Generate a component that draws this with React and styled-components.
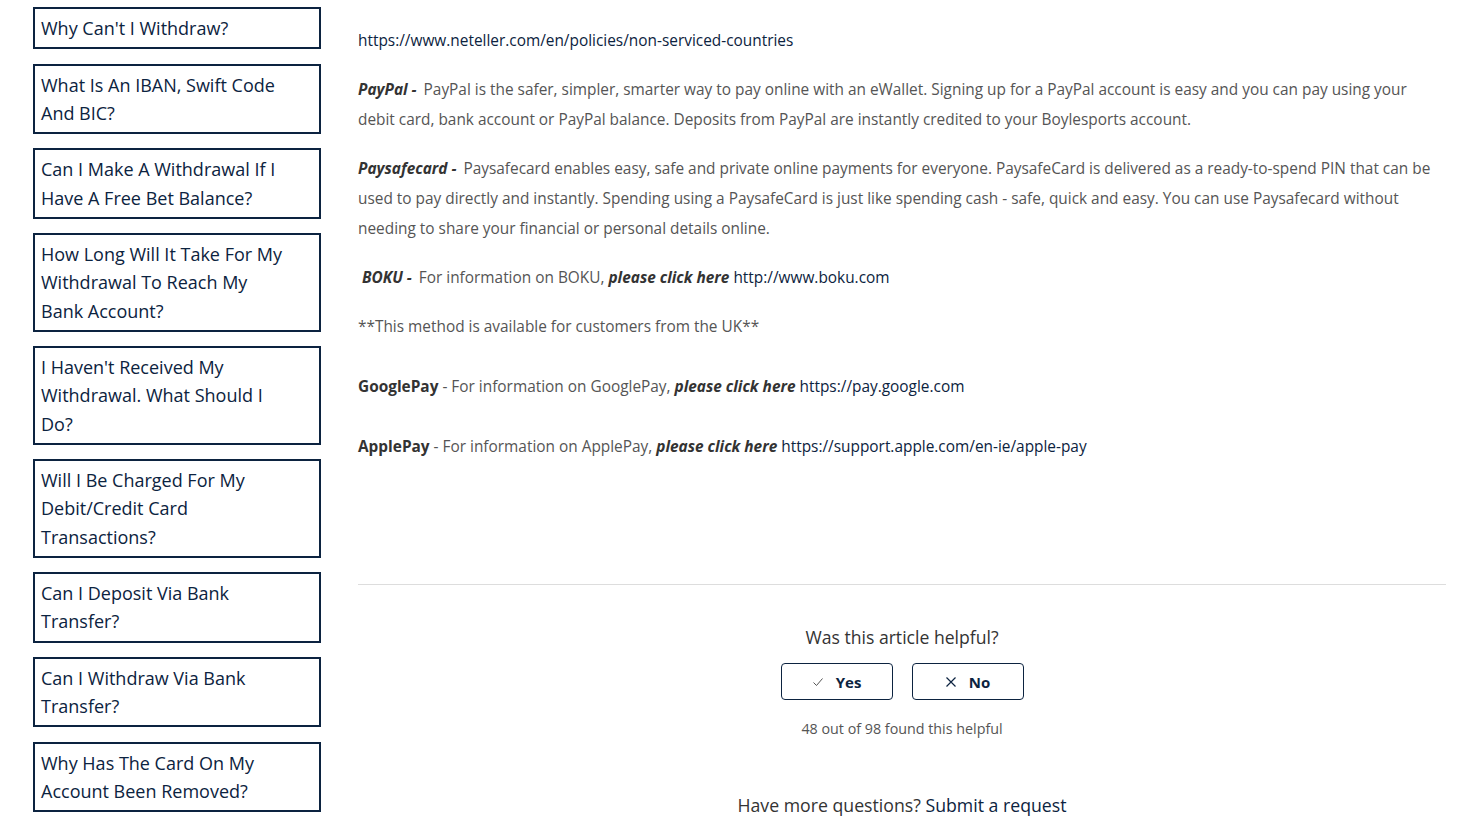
import React from "react";
import styled, { createGlobalStyle } from "styled-components";

const GlobalStyle = createGlobalStyle`
  html, body {
    margin: 0;
    padding: 0;
    background: #fff;
  }
  body {
    font-family: "Open Sans", "Noto Sans", sans-serif;
  }
`;

const NAVY = "#0c2340";

const links = [
  "Why Can't I Withdraw?",
  "What Is An IBAN, Swift Code And BIC?",
  "Can I Make A Withdrawal If I Have A Free Bet Balance?",
  "How Long Will It Take For My Withdrawal To Reach My Bank Account?",
  "I Haven't Received My Withdrawal. What Should I Do?",
  "Will I Be Charged For My Debit/Credit Card Transactions?",
  "Can I Deposit Via Bank Transfer?",
  "Can I Withdraw Via Bank Transfer?",
  "Why Has The Card On My Account Been Removed?",
];

const App = () => {
  return (
    <>
      <GlobalStyle />
      <Page>
        <Sidebar>
          {links.map((text, i) => (
            <SideLink key={i}>{text}</SideLink>
          ))}
        </Sidebar>
        <Main>
          <Article>
            <Para>
              <Link>https://www.neteller.com/en/policies/non-serviced-countries</Link>
            </Para>
            <Para>
              <Label $italic $dash>PayPal -</Label> PayPal is the safer, simpler, smarter way to
              pay online with an eWallet. Signing up for a PayPal account is easy and you can pay
              using your debit card, bank account or PayPal balance. Deposits from PayPal are
              instantly credited to your Boylesports account.
            </Para>
            <Para>
              <Label $italic $dash>Paysafecard -</Label> Paysafecard enables easy, safe and
              private online payments for everyone. PaysafeCard is delivered as a ready-to-spend
              PIN that can be used to pay directly and instantly. Spending using a PaysafeCard is
              just like spending cash - safe, quick and easy. You can use Paysafecard without
              needing to share your financial or personal details online.
            </Para>
            <Para>
              &nbsp;<Label $italic $dash>BOKU -</Label> For information on BOKU,{" "}
              <Label $italic>please click here</Label> <Link>http://www.boku.com</Link>
            </Para>
            <Para>**This method is available for customers from the UK**</Para>
            <Para $spaced>
              <Label>GooglePay</Label> - For information on GooglePay,{" "}
              <Label $italic>please click here</Label> <Link>https://pay.google.com</Link>
            </Para>
            <Para $spaced>
              <Label>ApplePay</Label> - For information on ApplePay,{" "}
              <Label $italic>please click here</Label>{" "}
              <Link>https://support.apple.com/en-ie/apple-pay</Link>
            </Para>
          </Article>
          <Divider />
          <Feedback>
            <FeedbackTitle>Was this article helpful?</FeedbackTitle>
            <VoteRow>
              <VoteButton>
                <svg width="12" height="12" viewBox="0 0 12 12" fill="none">
                  <path d="M1.5 6.5 L4.5 9.5 L10.5 2.5" stroke="#555" strokeWidth="1" />
                </svg>
                Yes
              </VoteButton>
              <VoteButton>
                <svg width="12" height="12" viewBox="0 0 12 12" fill="none">
                  <path d="M1.5 1.5 L10.5 10.5 M10.5 1.5 L1.5 10.5" stroke={NAVY} strokeWidth="1.2" />
                </svg>
                No
              </VoteButton>
            </VoteRow>
            <VoteCount>48 out of 98 found this helpful</VoteCount>
          </Feedback>
          <MoreQuestions>
            Have more questions? <Link>Submit a request</Link>
          </MoreQuestions>
        </Main>
      </Page>
    </>
  );
};

export default App;

const Page = styled.div`
  display: flex;
  align-items: flex-start;
  gap: 37px;
  padding: 7px 16px 0 33px;
  height: 822px;
  box-sizing: border-box;
  overflow: hidden;
`;

const Sidebar = styled.nav`
  display: flex;
  flex-direction: column;
  gap: 14.25px;
  width: 288px;
  flex-shrink: 0;
`;

const SideLink = styled.a`
  display: block;
  border: 2px solid ${NAVY};
  padding: 5px 33px 5px 6px;
  font-size: 18px;
  line-height: 28.25px;
  color: ${NAVY};
  cursor: pointer;
`;

const Main = styled.main`
  flex: 1;
  display: flex;
  flex-direction: column;
  padding-top: 19px;
`;

const Article = styled.div`
  padding-right: 6px;
  font-size: 15.4px;
  line-height: 30px;
  color: #555;
`;

const Para = styled.p`
  margin: ${(p) => (p.$spaced ? "30px 0 19px" : "0 0 19px")};
`;

const Label = styled.strong`
  font-weight: 700;
  font-style: ${(p) => (p.$italic ? "italic" : "normal")};
  margin-right: ${(p) => (p.$dash ? "3px" : "0")};
  color: #333;
`;

const Link = styled.a`
  color: ${NAVY};
  text-decoration: none;
`;

const Divider = styled.hr`
  border: none;
  border-top: 1px solid #ddd;
  margin: 103px 0 0;
`;

const Feedback = styled.div`
  display: flex;
  flex-direction: column;
  align-items: center;
  padding-top: 39px;
`;

const FeedbackTitle = styled.div`
  font-size: 17.6px;
  line-height: 26px;
  color: #333;
`;

const VoteRow = styled.div`
  display: flex;
  gap: 19px;
  margin-top: 13px;
`;

const VoteButton = styled.button`
  display: flex;
  align-items: center;
  justify-content: center;
  gap: 12px;
  width: 112px;
  height: 37px;
  border: 1px solid ${NAVY};
  border-radius: 4px;
  background: #fff;
  font-family: inherit;
  font-size: 15px;
  font-weight: 700;
  color: ${NAVY};
  cursor: pointer;
`;

const VoteCount = styled.div`
  margin-top: 18px;
  font-size: 14.3px;
  line-height: 22px;
  color: #555;
`;

const MoreQuestions = styled.div`
  margin-top: 52px;
  text-align: center;
  font-size: 17.7px;
  line-height: 26px;
  color: #333;
`;
